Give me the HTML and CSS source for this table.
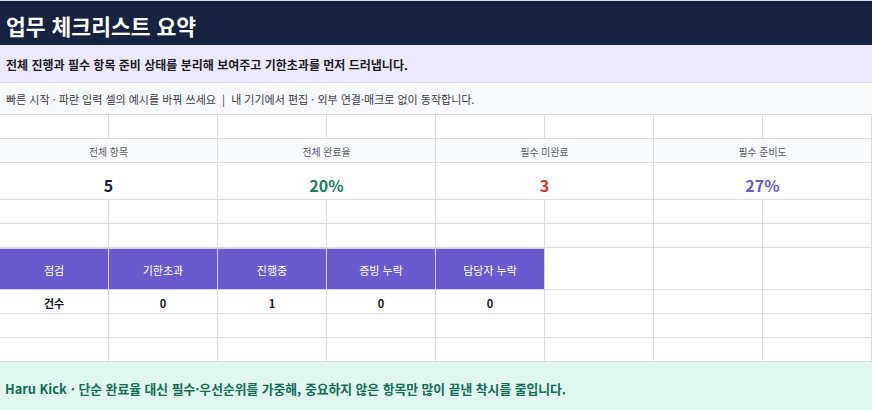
FILE: index.html
```html
<!DOCTYPE html>
<html lang="ko">
<head>
<meta charset="utf-8">
<link rel="stylesheet" href="styles.css">
</head>
<body>
<div class="sheet">
  <div class="cell full title">업무 체크리스트 요약</div>
  <div class="cell full subtitle">전체 진행과 필수 항목 준비 상태를 분리해 보여주고 기한초과를 먼저 드러냅니다.</div>
  <div class="cell full note">빠른 시작 · 파란 입력 셀의 예시를 바꿔 쓰세요 &nbsp;| &nbsp;내 기기에서 편집 · 외부 연결·매크로 없이 동작합니다.</div>

  <div class="cell"></div><div class="cell"></div><div class="cell"></div><div class="cell"></div>
  <div class="cell"></div><div class="cell"></div><div class="cell"></div><div class="cell"></div>

  <div class="cell span2 stat-label">전체 항목</div>
  <div class="cell span2 stat-label">전체 완료율</div>
  <div class="cell span2 stat-label">필수 미완료</div>
  <div class="cell span2 stat-label">필수 준비도</div>

  <div class="cell span2 stat-value v-dark">5</div>
  <div class="cell span2 stat-value v-green">20%</div>
  <div class="cell span2 stat-value v-red">3</div>
  <div class="cell span2 stat-value v-purple">27%</div>

  <div class="cell"></div><div class="cell"></div><div class="cell"></div><div class="cell"></div>
  <div class="cell"></div><div class="cell"></div><div class="cell"></div><div class="cell"></div>
  <div class="cell"></div><div class="cell"></div><div class="cell"></div><div class="cell"></div>
  <div class="cell"></div><div class="cell"></div><div class="cell"></div><div class="cell"></div>

  <div class="cell th">점검</div>
  <div class="cell th">기한초과</div>
  <div class="cell th">진행중</div>
  <div class="cell th">증빙 누락</div>
  <div class="cell th">담당자 누락</div>
  <div class="cell"></div><div class="cell"></div><div class="cell"></div>

  <div class="cell td">건수</div>
  <div class="cell td">0</div>
  <div class="cell td">1</div>
  <div class="cell td">0</div>
  <div class="cell td">0</div>
  <div class="cell"></div><div class="cell"></div><div class="cell"></div>

  <div class="cell"></div><div class="cell"></div><div class="cell"></div><div class="cell"></div>
  <div class="cell"></div><div class="cell"></div><div class="cell"></div><div class="cell"></div>
  <div class="cell"></div><div class="cell"></div><div class="cell"></div><div class="cell"></div>
  <div class="cell"></div><div class="cell"></div><div class="cell"></div><div class="cell"></div>

  <div class="cell full footer"><span class="brand">Haru Kick</span> · 단순 완료율 대신 필수·우선순위를 가중해, 중요하지 않은 항목만 많이 끝낸 착시를 줄입니다.</div>
</div>
</body>
</html>
```

FILE: styles.css
```css
* { box-sizing: border-box; }
html, body { margin: 0; padding: 0; background: #ffffff; }
body {
  font-family: "Noto Sans CJK KR", "Noto Sans", sans-serif;
  color: #1b1b24;
  overflow: hidden;
}
.sheet {
  display: grid;
  grid-template-columns: repeat(8, 109px);
  grid-template-rows: 45px 38px 32px 24px 24px 37px 24px 24px 42px 24px 24px 24px 48px;
  width: 872px;
}
.cell {
  border-right: 1px solid #dcdde4;
  border-bottom: 1px solid #dcdde4;
  display: flex;
  align-items: center;
  justify-content: center;
  white-space: nowrap;
  min-width: 0;
}
.full { grid-column: span 8; justify-content: flex-start; padding-left: 6px; border-right: none; }
.span2 { grid-column: span 2; }
.title {
  background: #16223f;
  color: #ffffff;
  font-size: 21.5px;
  font-weight: 700;
  border-top: 1px solid #d8dbe8;
  border-bottom: none;
  padding-top: 4px;
}
.subtitle {
  background: #ece9fc;
  font-size: 12px;
  font-weight: 700;
  color: #1a1a2a;
  border-bottom-color: #dcdce6;
  padding-top: 1px;
}
.note {
  background: #f8f9fc;
  font-size: 11px;
  color: #3a3a44;
  padding-top: 1px;
}
.stat-label {
  background: #f8fafc;
  font-size: 9.8px;
  color: #555a66;
  padding-top: 2px;
}
.stat-value {
  font-size: 16px;
  font-weight: 700;
  padding-top: 7px;
}
.v-dark { color: #1b1f33; }
.v-green { color: #1e7a62; }
.v-red { color: #c0392b; }
.v-purple { color: #6a5acd; }
.th {
  background: #6a5acd;
  color: #ffffff;
  font-size: 11px;
  border-right-color: #d6d1f3;
  border-bottom-color: #d6d1f3;
  border-top: 1px solid #d6d1f3;
  padding-top: 2px;
}
.td {
  font-size: 11px;
  font-weight: 700;
  color: #16161e;
  padding-top: 3px;
}
.footer {
  background: #dff7ee;
  color: #136b58;
  font-size: 12.8px;
  font-weight: 700;
  border-bottom: none;
  padding-left: 5px;
  padding-top: 4px;
}
.brand { margin-right: 4px; }
```
